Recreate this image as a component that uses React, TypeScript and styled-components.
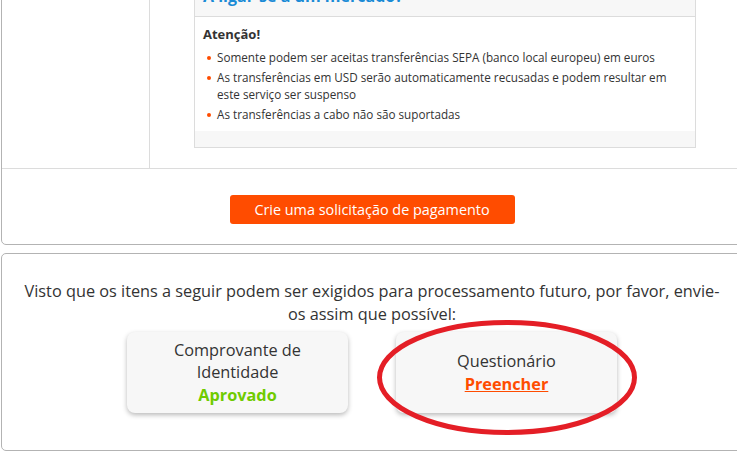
import styled, { createGlobalStyle } from "styled-components";

const GlobalStyle = createGlobalStyle`
  html, body {
    margin: 0;
    padding: 0;
    background: #fff;
    overflow: hidden;
  }
  body {
    font-family: "Open Sans", "Liberation Sans", sans-serif;
    color: #333;
  }
`;

const Page = styled.div`
  width: 737px;
  height: 453px;
  overflow: hidden;
  display: flex;
  flex-direction: column;
  gap: 8px;
`;

const Panel = styled.section<{ $offset?: number }>`
  width: 740px;
  margin-left: 1px;
  margin-top: ${({ $offset }) => $offset ?? 0}px;
  border: 1px solid #b3b3b3;
  border-radius: 5px;
  background: #fff;
  flex-shrink: 0;
`;

const SplitRow = styled.div`
  display: flex;
  border-bottom: 1px solid #dcdcdc;
`;

const SideColumn = styled.div`
  width: 147px;
  border-right: 1px solid #dcdcdc;
`;

const MainColumn = styled.div`
  flex: 1;
  padding: 20px 0 20px 44px;
`;

const InfoBox = styled.div`
  width: 500px;
  border: 1px solid #dcdcdc;
  background: #fff;
`;

const InfoHeader = styled.div`
  padding: 6px 8px 10px;
  background: #f7f7f7;
  border-bottom: 1px solid #dcdcdc;
  font-size: 16px;
  line-height: 20px;
  a {
    font-weight: 700;
    color: #1a8bd6;
    text-decoration: none;
  }
`;

const InfoBody = styled.div`
  padding: 8px;
  h4 {
    margin: 0 0 6px;
    font-size: 13px;
    line-height: 18px;
    font-weight: 700;
    color: #333;
  }
`;

const BulletList = styled.ul`
  margin: 0;
  padding: 0;
  list-style: none;
  display: flex;
  flex-direction: column;
  gap: 3px;
`;

const Bullet = styled.li`
  position: relative;
  padding-left: 14px;
  font-size: 11.7px;
  line-height: 17px;
  color: #333;
  &::before {
    content: "";
    position: absolute;
    left: 4px;
    top: 7px;
    width: 4px;
    height: 4px;
    border-radius: 50%;
    background: #ff4c00;
  }
`;

const InfoFooter = styled.div`
  height: 16px;
  background: #f7f7f7;
`;

const ButtonRow = styled.div`
  display: flex;
  justify-content: center;
  padding: 26px 0 20px;
`;

const OrangeButton = styled.button`
  width: 285px;
  height: 29px;
  border: none;
  border-radius: 3px;
  background: #ff4c00;
  color: #fff;
  font-family: "Open Sans", "Liberation Sans", sans-serif;
  font-size: 14.4px;
  cursor: pointer;
`;

const RequestPanel = styled.div`
  padding: 26px 18px 37px;
  display: flex;
  flex-direction: column;
  align-items: center;
  gap: 6px;
  p {
    margin: 0;
    max-width: 698px;
    font-size: 16.3px;
    line-height: 23px;
    text-align: center;
    color: #333;
  }
`;

const CardRow = styled.div`
  display: flex;
  gap: 48px;
`;

const CardSpot = styled.div`
  position: relative;
`;

const DocCard = styled.div`
  width: 221px;
  height: 81px;
  box-sizing: border-box;
  padding: 0 24px;
  border-radius: 8px;
  background: #f7f7f7;
  box-shadow: 0 2px 5px rgba(0, 0, 0, 0.28);
  display: flex;
  flex-direction: column;
  align-items: center;
  justify-content: center;
  text-align: center;
  font-size: 16.3px;
  line-height: 22.5px;
  color: #333;
`;

const Status = styled.a<{ $tone: "ok" | "todo" }>`
  font-weight: 700;
  color: ${({ $tone }) => ($tone === "ok" ? "#6fcb00" : "#ff4c00")};
  text-decoration: ${({ $tone }) => ($tone === "ok" ? "none" : "underline")};
`;

const Highlight = styled.svg`
  position: absolute;
  left: -19px;
  top: -12px;
  width: 260px;
  height: 115px;
  pointer-events: none;
  overflow: visible;
`;

export default function App() {
  return (
    <>
      <GlobalStyle />
      <Page>
        <Panel $offset={-42}>
          <SplitRow>
            <SideColumn />
            <MainColumn>
              <InfoBox>
                <InfoHeader>
                  <a href="#">A ligar-se a um mercado?</a>
                </InfoHeader>
                <InfoBody>
                  <h4>Atenção!</h4>
                  <BulletList>
                    <Bullet>
                      Somente podem ser aceitas transferências SEPA (banco local europeu) em euros
                    </Bullet>
                    <Bullet>
                      As transferências em USD serão automaticamente recusadas e podem resultar em
                      este serviço ser suspenso
                    </Bullet>
                    <Bullet>As transferências a cabo não são suportadas</Bullet>
                  </BulletList>
                </InfoBody>
                <InfoFooter />
              </InfoBox>
            </MainColumn>
          </SplitRow>
          <ButtonRow>
            <OrangeButton>Crie uma solicitação de pagamento</OrangeButton>
          </ButtonRow>
        </Panel>
        <Panel>
          <RequestPanel>
            <p>
              Visto que os itens a seguir podem ser exigidos para processamento futuro, por
              favor, envie-os assim que possível:
            </p>
            <CardRow>
              <CardSpot>
                <DocCard>
                  <span>Comprovante de Identidade</span>
                  <Status $tone="ok">Aprovado</Status>
                </DocCard>
              </CardSpot>
              <CardSpot>
                <DocCard>
                  <span>Questionário</span>
                  <Status $tone="todo" href="#">
                    Preencher
                  </Status>
                </DocCard>
                <Highlight viewBox="0 0 260 115">
                  <ellipse
                    cx="130"
                    cy="57.5"
                    rx="127.5"
                    ry="55"
                    fill="none"
                    stroke="#e41e26"
                    strokeWidth="5"
                  />
                </Highlight>
              </CardSpot>
            </CardRow>
          </RequestPanel>
        </Panel>
      </Page>
    </>
  );
}
